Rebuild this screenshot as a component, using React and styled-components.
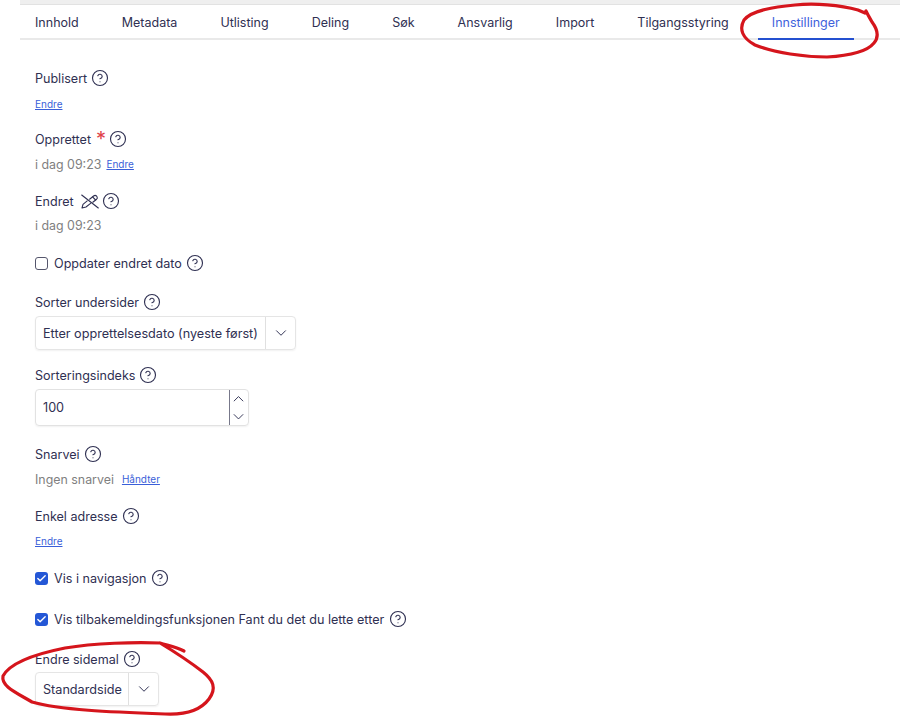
import React from 'react';
import styled, { createGlobalStyle } from 'styled-components';
import { Check, ChevronDown, ChevronUp, CircleHelp } from 'lucide-react';

const GlobalStyle = createGlobalStyle`
  html, body {
    margin: 0;
    background: #fff;
    font-family: Inter, "Noto Sans", sans-serif;
    color: #2f3052;
  }
`;

const Page = styled.div`
  position: relative;
  width: 900px;
  height: 718px;
  overflow: hidden;
  padding-left: 20px;
  box-sizing: border-box;
`;

const TopStrip = styled.div`
  height: 4px;
  background: #efefef;
  border-bottom: 1px solid #e2e2e2;
`;

const Tabs = styled.nav`
  display: flex;
  gap: 15.05px;
  height: 33px;
  padding-left: 1px;
  border-bottom: 2px solid #e9e9e9;
`;

const Tab = styled.div`
  padding: 0 14px;
  font-size: 12.5px;
  line-height: 35px;
  height: 33px;
  white-space: nowrap;
  color: ${(p) => (p.$active ? '#3f62dc' : '#2f3052')};
  border-bottom: ${(p) => (p.$active ? '2px solid #2450d0' : 'none')};
`;

const Form = styled.div`
  padding: 28px 0 0 15px;
`;

const Field = styled.div`
  margin-bottom: ${(p) => p.$after}px;
`;

const Label = styled.div`
  display: flex;
  align-items: center;
  gap: 4px;
  height: 20px;
  font-size: 12.55px;
  white-space: nowrap;
`;

const Star = styled.span`
  color: #e0404a;
  font-size: 20px;
  line-height: 20px;
  margin: -1px -1px 0 1px;
`;

const Help = styled(CircleHelp).attrs({ size: 18, strokeWidth: 1.5 })`
  color: #2f3052;
  flex: none;
`;

const ValueRow = styled.div`
  display: flex;
  align-items: center;
  gap: ${(p) => p.$gap || 5}px;
  height: 20px;
  margin-top: ${(p) => p.$top}px;
`;

const Muted = styled.span`
  font-size: 12.4px;
  color: #808080;
`;

const EditLink = styled.a`
  font-size: 10px;
  color: #3a5fd9;
  text-decoration: underline;
`;

const CheckRow = styled.div`
  display: flex;
  align-items: center;
  gap: 4.5px;
  height: 20px;
  font-size: 12.6px;
  white-space: nowrap;
`;

const Box = styled.span`
  display: flex;
  align-items: center;
  justify-content: center;
  width: 13px;
  height: 13px;
  margin-right: 1.5px;
  box-sizing: border-box;
  border-radius: 3px;
  color: #fff;
  background: ${(p) => (p.$checked ? '#2457d6' : '#fff')};
  border: ${(p) => (p.$checked ? 'none' : '1px solid #55566c')};
`;

const SelectBox = styled.div`
  display: flex;
  align-items: stretch;
  box-sizing: border-box;
  width: ${(p) => p.$width}px;
  height: ${(p) => p.$height}px;
  margin-top: ${(p) => p.$top}px;
  border: 1px solid #e5e5e5;
  border-radius: 4px;
  box-shadow: 0 1px 2px rgba(0, 0, 0, 0.06);
  font-size: 12.65px;
`;

const SelectText = styled.div`
  flex: 1;
  display: flex;
  align-items: center;
  padding-left: 7px;
  white-space: nowrap;
`;

const SelectArrow = styled.div`
  display: flex;
  align-items: center;
  justify-content: center;
  width: 29px;
  border-left: 1px solid #e0e0e0;
`;

const NumberBox = styled.div`
  display: flex;
  box-sizing: border-box;
  width: 214px;
  height: 37px;
  margin-top: 4px;
  border: 1px solid #e2e2e2;
  border-radius: 4px;
  box-shadow: 0 1px 2px rgba(0, 0, 0, 0.06);
`;

const NumberInput = styled.input`
  flex: 1;
  min-width: 0;
  border: 0;
  outline: 0;
  padding: 0 7px;
  font: 12.65px Inter, sans-serif;
  color: #2f3052;
  background: transparent;
`;

const Stepper = styled.div`
  display: flex;
  flex-direction: column;
  align-items: center;
  justify-content: space-around;
  width: 18.5px;
  border-left: 1px solid #77788a;
`;

const PencilSvg = styled.svg`
  flex: none;
  margin: 0 -1px 0 3.5px;
`;

const Scribble = styled.svg`
  position: absolute;
  inset: 0;
  pointer-events: none;
`;

const tabs = ['Innhold', 'Metadata', 'Utlisting', 'Deling', 'Søk', 'Ansvarlig', 'Import', 'Tilgangsstyring', 'Innstillinger'];

const PencilCrossed = () => (
  <PencilSvg width="18" height="15" viewBox="0 0 18 15" fill="none" stroke="#2f3052" strokeWidth="1.1" strokeLinecap="round" strokeLinejoin="round">
    <path d="M.7 1 L17.3 14" />
    <path d="M6.2 6.8 L2 10.3 L1 14 L5 13 L9.6 9.4" />
    <path d="M8.6 5.2 L12.6 2 C13.6 1.2 14.6 1.2 15.5 2 L16 2.7 C16.6 3.6 16.4 4.5 15.6 5.2 L11.8 8.2" />
    <path d="M11.6 2.8 L14.6 6" />
  </PencilSvg>
);

const App = () => (
  <Page>
    <GlobalStyle />
    <TopStrip />
    <Tabs>
      {tabs.map((t) => (
        <Tab key={t} $active={t === 'Innstillinger'}>{t}</Tab>
      ))}
    </Tabs>

    <Form>
      <Field $after={15}>
        <Label>Publisert <Help /></Label>
        <ValueRow $top={6}><EditLink>Endre</EditLink></ValueRow>
      </Field>
      <Field $after={17}>
        <Label>Opprettet <Star>*</Star> <Help /></Label>
        <ValueRow $top={5}><Muted>i dag 09:23</Muted><EditLink>Endre</EditLink></ValueRow>
      </Field>
      <Field $after={18}>
        <Label>Endret <PencilCrossed /> <Help /></Label>
        <ValueRow $top={4}><Muted>i dag 09:23</Muted></ValueRow>
      </Field>
      <Field $after={19}>
        <CheckRow><Box />Oppdater endret dato <Help /></CheckRow>
      </Field>
      <Field $after={15}>
        <Label>Sorter undersider <Help /></Label>
        <SelectBox $width={261} $height={34} $top={4}>
          <SelectText>Etter opprettelsesdato (nyeste først)</SelectText>
          <SelectArrow><ChevronDown size={18} strokeWidth={1.3} /></SelectArrow>
        </SelectBox>
      </Field>
      <Field $after={18}>
        <Label>Sorteringsindeks <Help /></Label>
        <NumberBox>
          <NumberInput defaultValue="100" />
          <Stepper>
            <ChevronUp size={19} strokeWidth={1.3} />
            <ChevronDown size={19} strokeWidth={1.3} />
          </Stepper>
        </NumberBox>
      </Field>
      <Field $after={17}>
        <Label>Snarvei <Help /></Label>
        <ValueRow $top={5} $gap={8}><Muted>Ingen snarvei</Muted><EditLink>Håndter</EditLink></ValueRow>
      </Field>
      <Field $after={17}>
        <Label>Enkel adresse <Help /></Label>
        <ValueRow $top={5}><EditLink>Endre</EditLink></ValueRow>
      </Field>
      <Field $after={21}>
        <CheckRow><Box $checked><Check size={11} strokeWidth={3} /></Box>Vis i navigasjon <Help /></CheckRow>
      </Field>
      <Field $after={20}>
        <CheckRow><Box $checked><Check size={11} strokeWidth={3} /></Box>Vis tilbakemeldingsfunksjonen Fant du det du lette etter <Help /></CheckRow>
      </Field>
      <Field $after={0}>
        <Label>Endre sidemal <Help /></Label>
        <SelectBox $width={124} $height={34} $top={3}>
          <SelectText>Standardside</SelectText>
          <SelectArrow><ChevronDown size={18} strokeWidth={1.3} /></SelectArrow>
        </SelectBox>
      </Field>
    </Form>

    <Scribble width="900" height="718" viewBox="0 0 900 718" fill="none" stroke="#d5151c" strokeWidth="3.2" strokeLinecap="round" strokeLinejoin="round">
      <path d="M866 11 C869 17 868 15 872 22 C878 30 879 37 874 43 C866 53 845 56 827 57 C805 57 775 53 755 45 C742 38 739 29 744 20 C752 10 775 7 795 5 C815 3 840 5 858 10 L865 13" />
      <path d="M184 651 C176 647 170 646 160 643 C135 642 95 643 65 648 C35 654 10 663 3 676 C1 686 15 692 32 702 C60 710 110 712 165 714 C185 715 200 711 209 699 C217 688 213 680 203 672 C190 662 175 652 160 643" />
    </Scribble>
  </Page>
);

export default App;
